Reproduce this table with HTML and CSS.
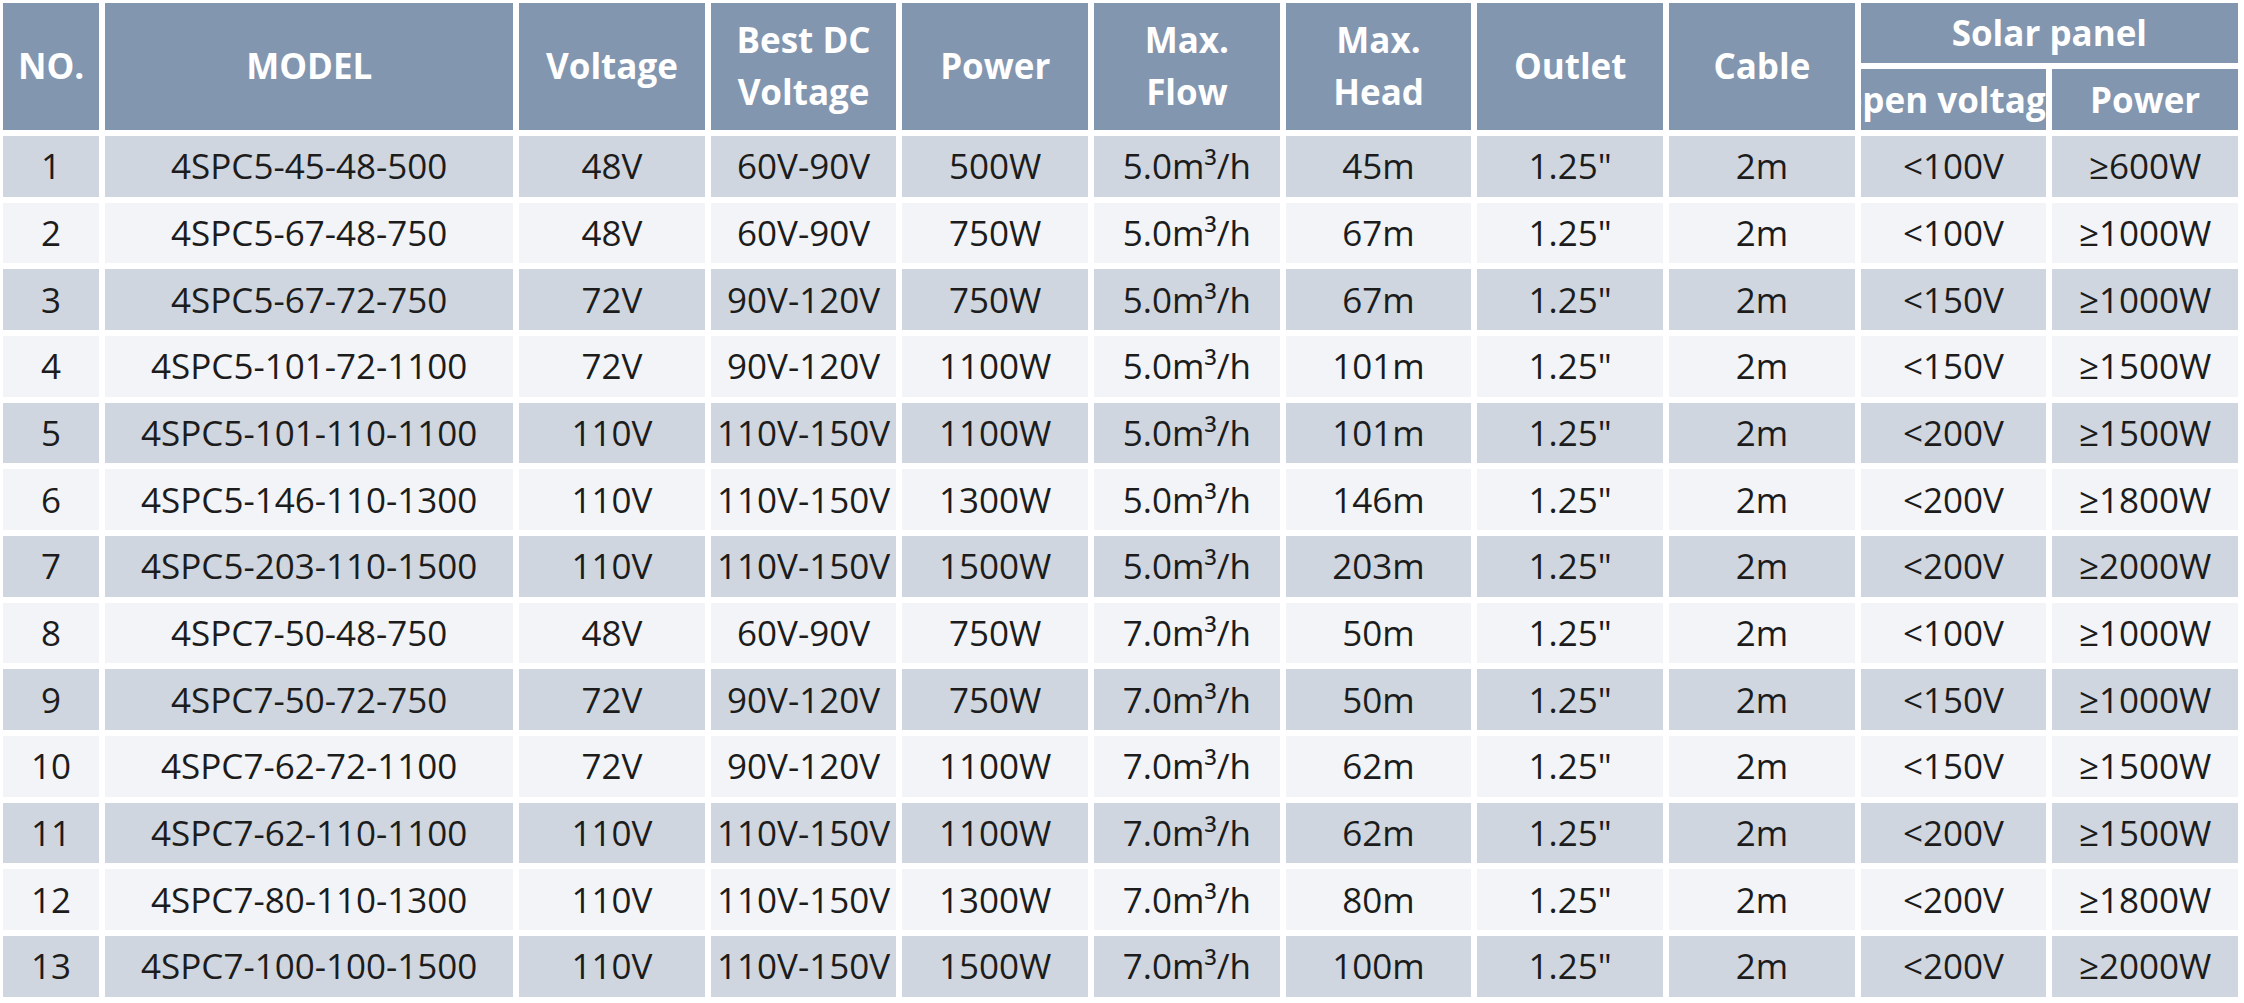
FILE: index.html
```html
<!DOCTYPE html>
<html>
<head>
<meta charset="utf-8">
<link rel="stylesheet" href="styles.css">
</head>
<body>
<table class="spec">
  <colgroup>
    <col class="c-no"><col class="c-model"><col class="c-std"><col class="c-std"><col class="c-std"><col class="c-std"><col class="c-std"><col class="c-std"><col class="c-std"><col class="c-std"><col class="c-std">
  </colgroup>
  <thead>
    <tr>
      <th rowspan="2">NO.</th>
      <th rowspan="2">MODEL</th>
      <th rowspan="2">Voltage</th>
      <th rowspan="2" class="two">Best DC<br>Voltage</th>
      <th rowspan="2">Power</th>
      <th rowspan="2" class="two">Max.<br>Flow</th>
      <th rowspan="2" class="two">Max.<br>Head</th>
      <th rowspan="2">Outlet</th>
      <th rowspan="2">Cable</th>
      <th colspan="2">Solar panel</th>
    </tr>
    <tr>
      <th><div class="clip"><span>open voltage</span></div></th>
      <th>Power</th>
    </tr>
  </thead>
  <tbody>
    <tr><td>1</td><td>4SPC5-45-48-500</td><td>48V</td><td>60V-90V</td><td>500W</td><td>5.0m³/h</td><td>45m</td><td>1.25"</td><td>2m</td><td>&lt;100V</td><td>≥600W</td></tr>
    <tr><td>2</td><td>4SPC5-67-48-750</td><td>48V</td><td>60V-90V</td><td>750W</td><td>5.0m³/h</td><td>67m</td><td>1.25"</td><td>2m</td><td>&lt;100V</td><td>≥1000W</td></tr>
    <tr><td>3</td><td>4SPC5-67-72-750</td><td>72V</td><td>90V-120V</td><td>750W</td><td>5.0m³/h</td><td>67m</td><td>1.25"</td><td>2m</td><td>&lt;150V</td><td>≥1000W</td></tr>
    <tr><td>4</td><td>4SPC5-101-72-1100</td><td>72V</td><td>90V-120V</td><td>1100W</td><td>5.0m³/h</td><td>101m</td><td>1.25"</td><td>2m</td><td>&lt;150V</td><td>≥1500W</td></tr>
    <tr><td>5</td><td>4SPC5-101-110-1100</td><td>110V</td><td>110V-150V</td><td>1100W</td><td>5.0m³/h</td><td>101m</td><td>1.25"</td><td>2m</td><td>&lt;200V</td><td>≥1500W</td></tr>
    <tr><td>6</td><td>4SPC5-146-110-1300</td><td>110V</td><td>110V-150V</td><td>1300W</td><td>5.0m³/h</td><td>146m</td><td>1.25"</td><td>2m</td><td>&lt;200V</td><td>≥1800W</td></tr>
    <tr><td>7</td><td>4SPC5-203-110-1500</td><td>110V</td><td>110V-150V</td><td>1500W</td><td>5.0m³/h</td><td>203m</td><td>1.25"</td><td>2m</td><td>&lt;200V</td><td>≥2000W</td></tr>
    <tr><td>8</td><td>4SPC7-50-48-750</td><td>48V</td><td>60V-90V</td><td>750W</td><td>7.0m³/h</td><td>50m</td><td>1.25"</td><td>2m</td><td>&lt;100V</td><td>≥1000W</td></tr>
    <tr><td>9</td><td>4SPC7-50-72-750</td><td>72V</td><td>90V-120V</td><td>750W</td><td>7.0m³/h</td><td>50m</td><td>1.25"</td><td>2m</td><td>&lt;150V</td><td>≥1000W</td></tr>
    <tr><td>10</td><td>4SPC7-62-72-1100</td><td>72V</td><td>90V-120V</td><td>1100W</td><td>7.0m³/h</td><td>62m</td><td>1.25"</td><td>2m</td><td>&lt;150V</td><td>≥1500W</td></tr>
    <tr><td>11</td><td>4SPC7-62-110-1100</td><td>110V</td><td>110V-150V</td><td>1100W</td><td>7.0m³/h</td><td>62m</td><td>1.25"</td><td>2m</td><td>&lt;200V</td><td>≥1500W</td></tr>
    <tr><td>12</td><td>4SPC7-80-110-1300</td><td>110V</td><td>110V-150V</td><td>1300W</td><td>7.0m³/h</td><td>80m</td><td>1.25"</td><td>2m</td><td>&lt;200V</td><td>≥1800W</td></tr>
    <tr><td>13</td><td>4SPC7-100-100-1500</td><td>110V</td><td>110V-150V</td><td>1500W</td><td>7.0m³/h</td><td>100m</td><td>1.25"</td><td>2m</td><td>&lt;200V</td><td>≥2000W</td></tr>
  </tbody>
</table>
</body>
</html>
```
FILE: styles.css
```css
html, body {
  margin: 0;
  padding: 0;
  background: #ffffff;
  overflow: hidden;
}

body {
  font-family: "Open Sans", "Noto Sans", "Liberation Sans", sans-serif;
  color: #1c1c1c;
}

.spec {
  table-layout: fixed;
  border-collapse: separate;
  border-spacing: 6px 6px;
  margin: -3.3px 0 0 -3.1px;
  width: 2247.1px;
}

.c-no { width: 96.4px; }
.c-model { width: 407.8px; }
.c-std { width: 185.66px; }

.spec th,
.spec td {
  padding: 0;
  height: 60.67px;
  text-align: center;
  vertical-align: middle;
  white-space: nowrap;
  overflow: hidden;
}

.spec th {
  background: #8296b0;
  color: #ffffff;
  font-weight: 700;
  font-size: 35px;
  line-height: 52px;
}

.spec td {
  font-size: 35px;
  line-height: 42px;
  font-weight: 400;
}

.spec tbody tr:nth-child(odd) td {
  background: #cfd6df;
}

.spec tbody tr:nth-child(even) td {
  background: #f2f4f7;
}

.clip {
  display: flex;
  justify-content: center;
  overflow: hidden;
  white-space: nowrap;
}

.clip span {
  flex: none;
}
```
